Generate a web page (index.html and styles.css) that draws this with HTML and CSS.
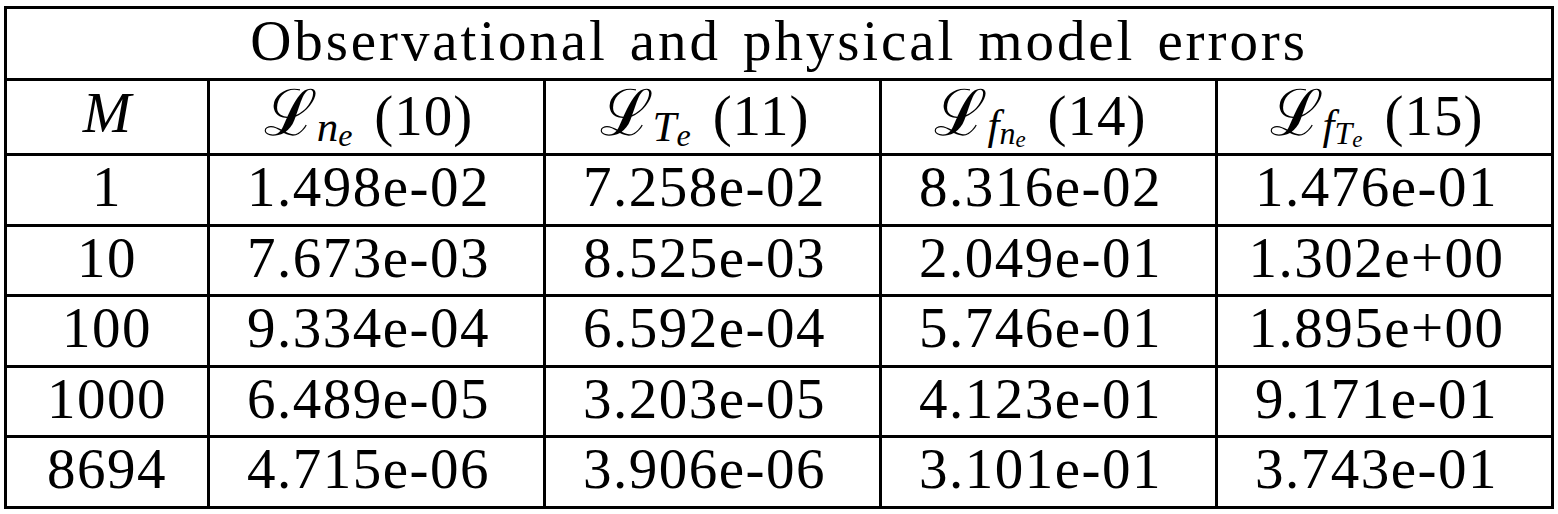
FILE: index.html
```html
<!DOCTYPE html>
<html lang="en">
<head>
    <meta charset="UTF-8">
    <title>Observational and physical model errors</title>
    <link rel="stylesheet" href="styles.css">
</head>
<body>
    <table class="errors">
        <colgroup>
            <col class="col-m">
            <col class="col-val">
            <col class="col-val">
            <col class="col-val">
            <col class="col-val">
        </colgroup>
        <thead>
            <tr>
                <th colspan="5" class="title">Observational and physical model errors</th>
            </tr>
            <tr class="heads">
                <th><i class="var">M</i></th>
                <th class="val"><span class="cal">ℒ</span><span class="sub"><i>n</i><span class="sub2"><i>e</i></span></span><span class="eq">(10)</span></th>
                <th class="val"><span class="cal">ℒ</span><span class="sub"><i>T</i><span class="sub2"><i>e</i></span></span><span class="eq">(11)</span></th>
                <th class="val"><span class="cal">ℒ</span><span class="sub low"><i>f</i><span class="sub2"><i>n</i><span class="sub3"><i>e</i></span></span></span><span class="eq">(14)</span></th>
                <th class="val"><span class="cal">ℒ</span><span class="sub low"><i>f</i><span class="sub2"><i>T</i><span class="sub3"><i>e</i></span></span></span><span class="eq">(15)</span></th>
            </tr>
        </thead>
        <tbody>
            <tr><td>1</td><td class="val">1.498e-02</td><td class="val">7.258e-02</td><td class="val">8.316e-02</td><td class="val">1.476e-01</td></tr>
            <tr><td>10</td><td class="val">7.673e-03</td><td class="val">8.525e-03</td><td class="val">2.049e-01</td><td class="val">1.302e+00</td></tr>
            <tr><td>100</td><td class="val">9.334e-04</td><td class="val">6.592e-04</td><td class="val">5.746e-01</td><td class="val">1.895e+00</td></tr>
            <tr><td>1000</td><td class="val">6.489e-05</td><td class="val">3.203e-05</td><td class="val">4.123e-01</td><td class="val">9.171e-01</td></tr>
            <tr><td>8694</td><td class="val">4.715e-06</td><td class="val">3.906e-06</td><td class="val">3.101e-01</td><td class="val">3.743e-01</td></tr>
        </tbody>
    </table>
</body>
</html>
```

FILE: styles.css
```css
body {
    margin: 6px 0 0 4px;
    background-color: #fff;
    color: #000;
    font-family: "Liberation Serif", serif;
}
.errors {
    border-collapse: collapse;
    table-layout: fixed;
    width: 1547px;
}
.col-m {
    width: 203px;
}
.col-val {
    width: 336px;
}
.errors th,
.errors td {
    border: 3px solid #000;
    padding: 0 0 6px;
    height: 61.5px;
    text-align: center;
    vertical-align: middle;
    font-size: 57px;
    font-weight: normal;
    line-height: 1;
    letter-spacing: 1.5px;
    white-space: nowrap;
}
.errors .val {
    padding-right: 16px;
}
.errors .title {
    height: 63px;
    letter-spacing: 2.9px;
    word-spacing: 5px;
}
.errors .heads th {
    height: 62px;
    padding-bottom: 8px;
    letter-spacing: 0;
}
.var {
    font-style: italic;
    font-size: 58px;
}
.cal {
    font-family: "DejaVu Serif", serif;
    font-size: 64px;
}
.sub {
    font-size: 43px;
    position: relative;
    top: 6px;
}
.sub.low {
    top: 4px;
}
.sub2 {
    font-size: 32px;
    position: relative;
    top: 5px;
}
.sub3 {
    font-size: 23px;
    position: relative;
    top: 3px;
}
.eq {
    margin-left: 22px;
    letter-spacing: 1px;
}
```
